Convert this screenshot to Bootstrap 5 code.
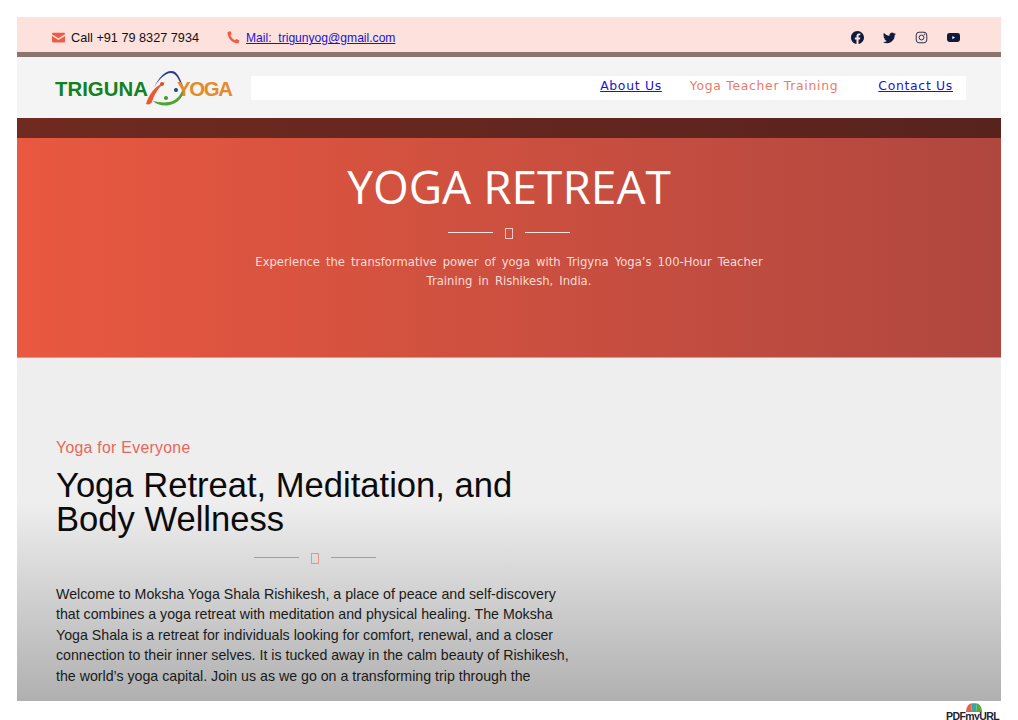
<!DOCTYPE html>
<html lang="en">
<head>
<meta charset="utf-8">
<title>Yoga Retreat</title>
<link href="https://cdn.jsdelivr.net/npm/bootstrap@5.3.0/dist/css/bootstrap.min.css" rel="stylesheet">
<style>
html,body{height:720px;overflow:hidden;background:#fff}
body{font-family:"Liberation Sans",Arial,sans-serif;color:#111}
.sheet{padding:17px 17px 0;height:720px;display:flex;flex-direction:column}
.topstrip{height:40px;background:#fde1dd;border-bottom:5px solid #8a7571;padding:6px 41px 0 35px}
.topstrip .callno{font-size:12.7px;line-height:1;margin-right:28px;margin-left:-2px;padding-top:2px}
.topstrip a{font-size:12.1px;line-height:1;color:#1a12d6;margin-left:-2px;padding-top:2px}
.ic-red{width:13px;height:13px;fill:#ee5c47;flex:none}
.ic-dark{width:13px;height:13px;fill:#0f1b3d;flex:none}
.navzone{height:61px;background:#f4f4f4;padding:0 35px 0 38px}
.brand{font-weight:700;font-size:20.4px;width:196px;text-decoration:none;padding-top:3px}
.brand .g{color:#12811f}
.brand .o{color:#e58a2c;letter-spacing:-1.3px}
.brand svg{width:46px;height:38px;margin:0 -13px 0 -4px;flex:none}
.navwhite{height:24px;background:#fff;padding:0 13px 2px 0;gap:28px;font-family:"DejaVu Sans",sans-serif;font-size:12.4px;letter-spacing:.7px}
.navwhite a{color:#1a12d6}
.navwhite .act{color:#ea7a6c;text-decoration:none;margin-right:12px}
.darkband{height:20px;background:linear-gradient(90deg,#702a20,#58231d)}
.hero{height:220px;background:linear-gradient(90deg,#e95840,#b0473f);border-bottom:1px solid #f08f82;color:#fff;text-align:center;padding-top:18px}
.hero h1{font-family:"Open Sans",sans-serif;font-size:46px;font-weight:400;line-height:60px;margin:0}
.hero p{font-family:"DejaVu Sans",sans-serif;font-size:11.6px;line-height:19px;width:520px;margin:0 auto;color:#fbdcd6;word-spacing:2.3px}
.divider{display:flex;align-items:center;justify-content:center;gap:12px}
.divider i{display:block;width:45px;height:1px;background:currentColor}
.divider b{display:block;width:8px;height:11px;border:1px solid currentColor;opacity:.8;margin-top:3px}
.hero .divider{margin:9px 0 14px;color:#fbe6e2}
.content{height:343px;overflow:hidden;background:linear-gradient(180deg,#eee 0,#eee 42%,#b0b0b0 100%);padding:80px 0 0 39px}
.content .kick{color:#e8665a;font-size:15.8px;line-height:20px;letter-spacing:.3px}
.content h2{font-size:34.6px;line-height:34px;font-weight:400;margin:10px 0 0;color:#0b0b0b;width:500px}
.content .divider{width:518px;color:#e8826f;margin:14px 0 20px}
.content p{font-size:14.2px;line-height:20.4px;width:520px;margin:0;color:#1a1a1a}
.pdfmark{height:19px;font-weight:700;font-size:10.5px;line-height:1;color:#1d2230;padding-right:2px;position:relative}
.pdfmark svg{position:absolute;right:18px;top:2px;width:18px;height:9px}
.pdfmark span{padding-top:10px;letter-spacing:-.6px}
</style>
</head>
<body>
<div class="sheet">
  <div class="topstrip d-flex align-items-center justify-content-between">
    <div class="d-flex align-items-center">
      <svg class="ic-red me-2" viewBox="0 0 16 16"><path d="M0 4l8 5 8-5V3a1 1 0 0 0-1-1H1a1 1 0 0 0-1 1zM0 6v7a1 1 0 0 0 1 1h14a1 1 0 0 0 1-1V6l-8 5z"/></svg>
      <span class="callno">Call +91 79 8327 7934</span>
      <svg class="ic-red me-2" viewBox="0 0 16 16"><path d="M1.2 1.1 3.6.2c.4-.1.8.1 1 .4l1.1 2.700c.2.4 0 .8-.3 1L4.200 5.300c.8 2.700 3.100 5.100 5.800 6.200l1.100-1.300c.3-.3.700-.4 1-.2l2.800 1.300c.4.200.6.600.4 1l-.9 2.300c-.2.400-.5.600-.9.600C6.700 15.200 .8 8.700.6 2c0-.4.200-.8.600-.9z"/></svg>
      <a href="#">Mail:&nbsp; trigunyog@gmail.com</a>
    </div>
    <div class="d-flex align-items-center" style="gap:19px">
      <svg class="ic-dark" viewBox="0 0 16 16"><path d="M16 8.049c0-4.446-3.582-8.05-8-8.05C3.580 0-.002 3.603-.002 8.050c0 4.017 2.926 7.347 6.750 7.951v-5.625h-2.030V8.050H6.750V6.275c0-2.017 1.195-3.131 3.022-3.131.876 0 1.791.157 1.791.157v1.980h-1.009c-.993 0-1.303.621-1.303 1.258v1.510h2.218l-.354 2.326H9.250V16c3.824-.604 6.750-3.934 6.750-7.951z"/></svg>
      <svg class="ic-dark" viewBox="0 0 16 16"><path d="M5.026 15c6.038 0 9.341-5.003 9.341-9.334 0-.14 0-.282-.006-.422A6.685 6.685 0 0 0 16 3.542a6.658 6.658 0 0 1-1.889.518 3.301 3.301 0 0 0 1.447-1.817 6.533 6.533 0 0 1-2.087.793A3.286 3.286 0 0 0 7.875 6.030a9.325 9.325 0 0 1-6.767-3.429 3.289 3.289 0 0 0 1.018 4.382A3.323 3.323 0 0 1 .64 6.575v.045a3.288 3.288 0 0 0 2.632 3.218 3.203 3.203 0 0 1-.865.115 3.230 3.230 0 0 1-.614-.057 3.283 3.283 0 0 0 3.067 2.277A6.588 6.588 0 0 1 .78 13.580a6.320 6.320 0 0 1-.78-.045A9.344 9.344 0 0 0 5.026 15z"/></svg>
      <svg class="ic-dark" viewBox="0 0 16 16" style="fill:none;stroke:#0f1b3d;stroke-width:1.1"><rect x="1.500" y="1.500" width="13" height="13" rx="3.500"/><circle cx="8" cy="8" r="3"/><circle cx="11.800" cy="4.200" r=".4"/></svg>
      <svg class="ic-dark" viewBox="0 0 16 16"><path fill-rule="evenodd" d="M3 2.500h10A3 3 0 0 1 16 5.500v5a3 3 0 0 1-3 3H3a3 3 0 0 1-3-3v-5a3 3 0 0 1 3-3zM6.500 6v4L10 8z"/></svg>
    </div>
  </div>

  <div class="navzone d-flex align-items-center">
    <a class="brand d-flex align-items-center" href="#">
      <span class="g">TRIGUNA</span>
      <svg viewBox="0 0 46 38"><path d="M2 34C5 24 11 16 21 12 14 18 10 25 8 32c-1 2-4 3-6 2z" fill="#ea5a2c"/><path d="M10 18C14 8 21 1 27 1c7 0 9 8 12 15l2 5c-5-5-6-17-14-18C21 3 14 10 10 18z" fill="#2b3a8e"/><path d="M9 31c6 6 20 7 28-3 2-3 3-6 2-9-3 7-7 12-14 13-6 1-11 0-16-1z" fill="#4fa32f"/><circle cx="18" cy="14" r="2" fill="#d9502e"/><circle cx="32" cy="20" r="2" fill="#2b3a8e"/><circle cx="22" cy="28" r="2" fill="#3e9a2c"/></svg>
      <span class="o">YOGA</span>
    </a>
    <div class="navwhite flex-grow-1 d-flex align-items-center justify-content-end">
      <a href="#">About Us</a>
      <a class="act" href="#">Yoga Teacher Training</a>
      <a href="#">Contact Us</a>
    </div>
  </div>

  <div class="darkband"></div>

  <div class="hero">
    <h1>YOGA RETREAT</h1>
    <div class="divider"><i></i><b></b><i></i></div>
    <p>Experience the transformative power of yoga with Trigyna Yoga’s 100-Hour Teacher Training in Rishikesh, India.</p>
  </div>

  <div class="content">
    <div class="kick">Yoga for Everyone</div>
    <h2>Yoga Retreat, Meditation, and Body Wellness</h2>
    <div class="divider"><i></i><b></b><i></i></div>
    <p>Welcome to Moksha Yoga Shala Rishikesh, a place of peace and self-discovery that combines a yoga retreat with meditation and physical healing. The Moksha Yoga Shala is a retreat for individuals looking for comfort, renewal, and a closer connection to their inner selves. It is tucked away in the calm beauty of Rishikesh, the world’s yoga capital. Join us as we go on a transforming trip through the</p>
  </div>

  <div class="pdfmark d-flex justify-content-end">
    <svg viewBox="0 0 18 9"><path d="M1 9C1 5 3 1 6 .5L7 9z" fill="#e8604e"/><path d="M6 .5C8 0 10 0 12 .5L11 9H7z" fill="#3aa6a0"/><path d="M12 .5C15 1 17 5 17 9H11z" fill="#5aa83f"/></svg>
    <span>PDFmyURL</span>
  </div>
</div>
<script src="https://cdn.jsdelivr.net/npm/bootstrap@5.3.0/dist/js/bootstrap.bundle.min.js"></script>
</body>
</html>
